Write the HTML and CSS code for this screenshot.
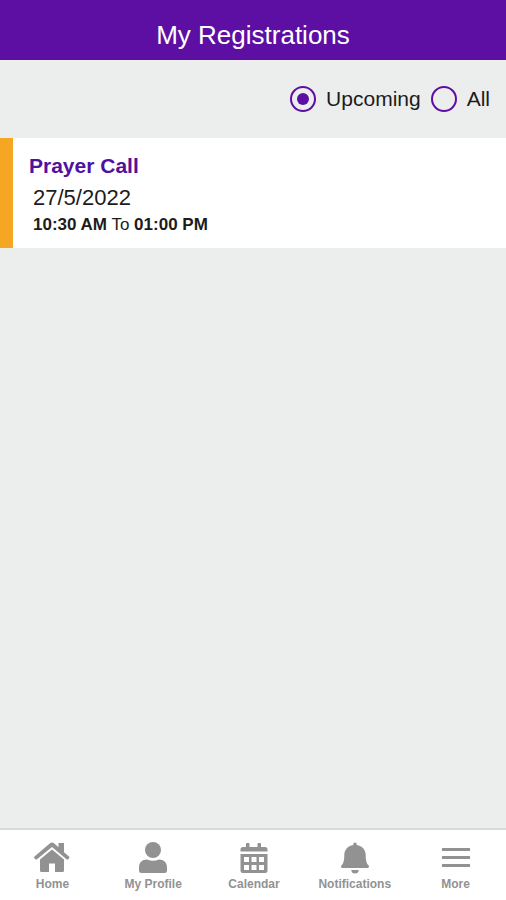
FILE: index.html
```html
<!DOCTYPE html>
<html lang="en">
<head>
<meta charset="utf-8">
<meta name="viewport" content="width=device-width, initial-scale=1">
<title>My Registrations</title>
<link rel="stylesheet" href="styles.css">
</head>
<body>
<header class="header"><h1 class="title">My Registrations</h1></header>
<main class="main">
  <form class="filter">
    <label class="option"><input class="radio" type="radio" name="range" value="upcoming" checked>Upcoming</label>
    <label class="option"><input class="radio" type="radio" name="range" value="all">All</label>
  </form>
  <article class="card">
    <h2 class="card-title">Prayer Call</h2>
    <p class="date">27/5/2022</p>
    <p class="time"><b>10:30 AM</b> To <b>01:00 PM</b></p>
  </article>
</main>
<nav class="tabs">
  <a class="tab" href="#home">
    <svg class="icon" viewBox="0 0 36 32" aria-hidden="true"><path d="M18 .500a3 3 0 0 1 2 .8l4.500 4V1H30v9.300l5 4.200q.8.800.1 1.700l-.9 1q-.8.700-1.700 0L18 5 3 17.200q-.9.700-1.700 0l-.9-1q-.7-.9.100-1.700L16 1.300a3 3 0 0 1 2-.8z"/><path d="M18 7.500l12 10V28.500q0 1.500-1.500 1.500H21v-8.500h-6V30H7.500Q6 30 6 28.500V17.500z"/></svg>
    <span>Home</span>
  </a>
  <a class="tab" href="#profile">
    <svg class="icon" viewBox="0 0 36 32" aria-hidden="true"><circle cx="18" cy="8" r="8"/><path d="M4 29v-3.500c0-5 3-8 8-8q6 2.500 12 0c5 0 8 3 8 8V29q0 2-2.500 2h-23Q4 31 4 29z"/></svg>
    <span>My Profile</span>
  </a>
  <a class="tab" href="#calendar">
    <svg class="icon" viewBox="0 0 36 32" aria-hidden="true"><path fill-rule="evenodd" d="M10 5V2q0-1 1-1h1.500q1 0 1 1v3h8V2q0-1 1-1H24q1 0 1 1v3h4q2.500 0 2.500 2.500V9.500h-27v-2Q4.500 5 7 5zM4.500 12h27v16.500q0 2.500-2.500 2.500H7q-2.500 0-2.500-2.500zM8 15v5h5v-5zM15.500 15v5h5v-5zM23 15v5h5v-5zM8 23v5h5v-5zM15.500 23v5h5v-5zM23 23v5h5v-5z"/></svg>
    <span>Calendar</span>
  </a>
  <a class="tab" href="#notifications">
    <svg class="icon" viewBox="0 0 36 32" aria-hidden="true"><path d="M16.300 3V2q0-1.500 1.700-1.500T19.700 2v1c5.800 1 9 5 9 10 0 6 1 8.300 2.300 9.700q1.300 1.300 1 2.300-.4 1-1.700 1H5.700q-1.300 0-1.700-1-.3-1 1-2.300C6.300 21.300 7.300 19 7.300 13c0-5 3.200-9 9-10zM14.200 28h7.600q-.5 3.600-3.800 3.600T14.200 28z"/></svg>
    <span>Notifications</span>
  </a>
  <a class="tab" href="#more">
    <svg class="icon" viewBox="0 0 36 32" aria-hidden="true"><path d="M4 6h28v3H4zM4 14h28v3H4zM4 22h28v3H4z"/></svg>
    <span>More</span>
  </a>
</nav>
</body>
</html>
```
FILE: styles.css
```css
* {
  box-sizing: border-box;
}

body {
  display: flex;
  flex-direction: column;
  min-height: 100vh;
  margin: 0;
  background: #eceeee;
  color: #1c1c1c;
  font-family: "Liberation Sans", Arial, sans-serif;
}

h1,
h2,
p {
  margin: 0;
}

.header {
  padding: 20px 16px 10px;
  background: #5d0fa3;
  color: #fff;
  text-align: center;
}

.title {
  font-size: 26px;
  font-weight: 400;
  line-height: 30px;
}

.main {
  flex: 1;
}

.filter {
  display: flex;
  justify-content: flex-end;
  gap: 10px;
  padding: 26px 16px;
}

.option {
  display: flex;
  align-items: center;
  gap: 10px;
  font-size: 21px;
  line-height: 26px;
}

.radio {
  display: grid;
  place-content: center;
  width: 26px;
  height: 26px;
  margin: 0;
  border: 2px solid #5d0fa3;
  border-radius: 50%;
  appearance: none;
}

.radio:checked::before {
  content: "";
  width: 12px;
  height: 12px;
  border-radius: 50%;
  background: #5d0fa3;
}

.card {
  padding: 12px 16px 12px 20px;
  border-left: 13px solid #f5a623;
  background: #fff;
}

.card-title {
  margin-left: -4px;
  color: #4f12a0;
  font-size: 21px;
  line-height: 32px;
}

.date {
  font-size: 22px;
  line-height: 32px;
}

.time {
  font-size: 17px;
  line-height: 22px;
}

.tabs {
  display: grid;
  grid-template-columns: repeat(5, 1fr);
  padding: 12px 0 8px 2px;
  border-top: 2px solid #d9dbdb;
  background: #fff;
}

.tab {
  display: flex;
  flex-direction: column;
  align-items: center;
  gap: 2px;
  color: #929292;
  font-size: 12px;
  font-weight: 700;
  line-height: 16px;
  text-decoration: none;
}

.icon {
  width: 36px;
  height: 32px;
  fill: #929292;
}
```
